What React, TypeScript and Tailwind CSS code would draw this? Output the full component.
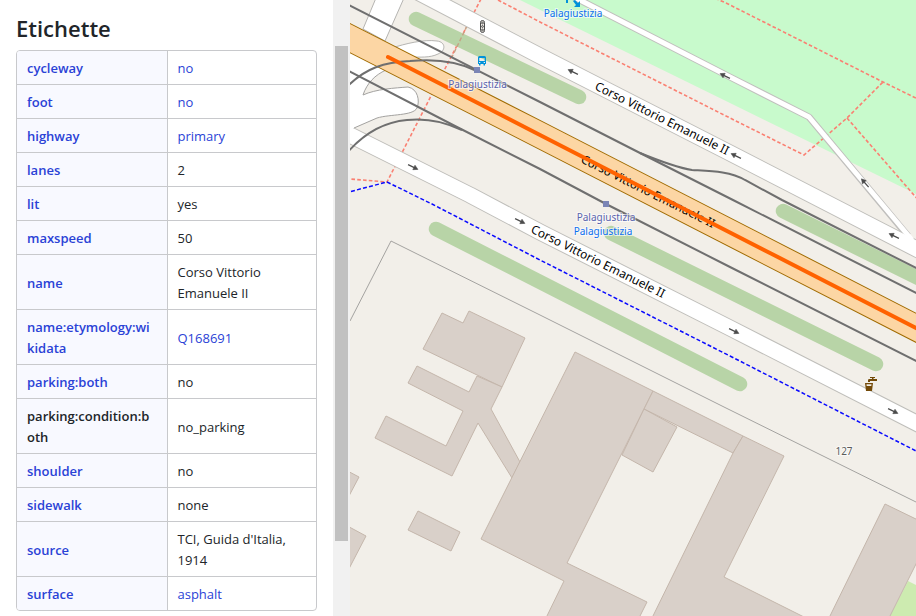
type Tag = { name: string; value: string; nameLink?: boolean; valueLink?: boolean };

const tags: Tag[] = [
  { name: "cycleway", value: "no", nameLink: true, valueLink: true },
  { name: "foot", value: "no", nameLink: true, valueLink: true },
  { name: "highway", value: "primary", nameLink: true, valueLink: true },
  { name: "lanes", value: "2", nameLink: true },
  { name: "lit", value: "yes", nameLink: true },
  { name: "maxspeed", value: "50", nameLink: true },
  { name: "name", value: "Corso Vittorio Emanuele II", nameLink: true },
  { name: "name:etymology:wikidata", value: "Q168691", nameLink: true, valueLink: true },
  { name: "parking:both", value: "no", nameLink: true },
  { name: "parking:condition:both", value: "no_parking" },
  { name: "shoulder", value: "no", nameLink: true },
  { name: "sidewalk", value: "none", nameLink: true },
  { name: "source", value: "TCI, Guida d'Italia, 1914", nameLink: true },
  { name: "surface", value: "asphalt", nameLink: true, valueLink: true },
];

function Label({ text, link }: { text: string; link?: boolean }) {
  return link ? (
    <a href="#" className="text-[#2a42d6]">
      {text}
    </a>
  ) : (
    <>{text}</>
  );
}

function TagTable() {
  return (
    <div className="overflow-hidden rounded border border-[#c8c9cc]">
      <table className="w-full table-fixed border-collapse text-left text-[13px] leading-[21px]">
        <tbody>
          {tags.map((t) => (
            <tr key={t.name} className="border-b border-[#c8c9cc] last:border-b-0">
              <th
                scope="row"
                className="w-[150px] border-r border-[#c8c9cc] bg-[#f8f9ff] pt-[7px] pr-3.5 pb-[5px] pl-2.5 align-middle font-semibold break-all"
              >
                <Label text={t.name} link={t.nameLink} />
              </th>
              <td className="px-2.5 pt-[7px] pb-[5px] align-middle break-words">
                <Label text={t.value} link={t.valueLink} />
              </td>
            </tr>
          ))}
        </tbody>
      </table>
    </div>
  );
}

const buildings = [
  "442,313 463,323 469,311 525,338 502,387 423,349",
  "417,366 469,392 477,376 502,387 491,409 520,462 512,478 478,423 452,476 375,438 386,416 446,446 463,411 408,383",
  "575,352 653,391 567,563 647,602 638,620 545,620 564,581 481,539",
  "653,391 743,436 733,453 644,409",
  "644,409 677,427 653,472 622,455",
  "743,436 784,456 724,577 810,620 651,620 733,453",
  "885,504 920,521 920,556 888,620 828,620",
  "418,511 460,532 451,551 408,530",
  "340,467 359,477 340,513",
  "340,522 366,536 340,586",
];

const roads = [
  "M410,-12 L540,56 L728,152 L930,256",
  "M340,130 L470,195 L540,232 L730,328 L930,430",
];

const arrows: [number, number, number][] = [
  [573, 72, 206],
  [736, 156, 206],
  [894, 236, 206],
  [725, 76, 206],
  [865, 183, 229],
  [413, 167, 26],
  [520, 221, 26],
  [734, 331, 26],
  [893, 411, 26],
];

const avenueLabels: [number, number][] = [
  [594, 89],
  [580, 162],
  [530, 232],
];

function AvenueName({ x, y }: { x: number; y: number }) {
  return (
    <text transform={`translate(${x} ${y}) rotate(26.5)`} fontSize="12" fill="#000">
      Corso Vittorio Emanuele II
    </text>
  );
}

function StreetMap() {
  return (
    <svg
      viewBox="350 0 566 616"
      preserveAspectRatio="xMinYMin slice"
      className="h-full w-full font-['Noto_Sans','Open_Sans',sans-serif]"
      role="img"
      aria-label="Map"
    >
      <rect x="340" y="0" width="600" height="640" fill="#f2efe9" />
      <path d="M520,0 L730,103 L920,196 V0 Z" fill="#c8facc" />
      <path d="M908,581 L920,587 V620 H888 Z" fill="#cdebb0" />

      <g fill="#d9d0c9" stroke="#c4b6ab" strokeWidth="1">
        {buildings.map((p) => (
          <polygon key={p} points={p} />
        ))}
      </g>
      <path d="M350,321 L391,241 L540,315 L726,408 L920,504" fill="none" stroke="#9b9a97" strokeWidth="0.9" />

      <g fill="none" stroke="#fa8072" strokeWidth="1.6" strokeDasharray="3.600 2.200">
        <path d="M498,0 L540,22 L730,118 L804,155 L847,118 L883,82" />
        <path d="M710,-4 L726,3 L883,82 L920,100" />
        <path d="M847,118 L920,202" />
        <path d="M481,-1 L467,26 L432,94 L387,182 L350,179" />
      </g>

      <g fill="none" stroke="#b8d4a7" strokeWidth="14.5" strokeLinecap="round">
        <path d="M416,19 L579,97" />
        <path d="M436,229 L740,384" />
        <path d="M611,233 L876,364" />
        <path d="M783,211 L924,281" />
      </g>
      <path
        d="M467,26 L452,57"
        fill="none"
        stroke="#c5a184"
        strokeWidth="1.4"
        strokeDasharray="4 2.4"
      />

      <g fill="none" strokeLinejoin="round">
        <path d="M572,-4 L730,77 L809,117 L908,236" stroke="#c0bfbd" strokeWidth="7" />
        <g stroke="#bfbeba" strokeWidth="17">
          {roads.map((d) => (
            <path key={d} d={d} />
          ))}
        </g>
        <path
          d="M376,-2 L363,29 L385,41 L404,-2 Z M392,48 C404,44 424,39 437,41 C446,42 446,51 438,54 C430,58 420,57 410,57 Z"
          fill="#fff"
          stroke="#b5b4b1"
        />
        <path
          d="M345,45 L386,70 C375,75 367,83 363,95 C376,89 395,88 408,87 C418,89 420,101 417,108 C413,116 390,114 377,118 L354,128 L345,140 Z"
          fill="#fff"
          stroke="#a3a2a0"
        />
        <g stroke="#fff" strokeWidth="15">
          {roads.map((d) => (
            <path key={d} d={d} />
          ))}
        </g>
        <path d="M572,-4 L730,77 L809,117 L912,240" stroke="#fff" strokeWidth="5" />
        <path d="M340,33 L540,135 L930,335" stroke="#a06b00" strokeWidth="27" />
        <path d="M340,33 L540,135 L930,335" stroke="#fcd6a4" strokeWidth="25" />
      </g>

      <path
        d="M345,193 L387,182 L432,204 L540,260 L730,356 L920,453"
        fill="none"
        stroke="#0a0aff"
        strokeWidth="1.5"
        strokeDasharray="4 2.2"
      />

      <g fill="none" stroke="#6f6f6f" strokeWidth="2">
        <path d="M345,3 L540,102 L642,154 L733,200 L920,295" />
        <path d="M640,153 C662,162 680,168 692,170 C710,171 730,171 745,180 L782,200 L920,270" />
        <path d="M345,69 L455,126 L540,169 L606,204 L730,267 L920,363" />
        <path d="M347,87 C365,68 385,62 410,61 C430,59 455,60 477,71" />
        <path d="M347,153 C365,132 385,122 407,120 C425,118 443,121 462,130" />
      </g>

      {avenueLabels.map(([x, y]) => (
        <AvenueName key={x} x={x} y={y} />
      ))}

      <path d="M388,57 L540,135 L924,332" fill="none" stroke="#ff6200" strokeWidth="4" strokeLinecap="round" />

      <g stroke="#4b4b4b" fill="#4b4b4b">
        {arrows.map(([x, y, a]) => (
          <g key={x} transform={`translate(${x} ${y}) rotate(${a})`}>
            <path d="M-5.500,0 H2" strokeWidth="1.2" />
            <path d="M1,-2.500 L5.500,0 L1,2.500 Z" strokeWidth="0.5" />
          </g>
        ))}
      </g>

      <g fill="#7b85b5">
        <rect x="474" y="67" width="6" height="6" />
        <rect x="603" y="201" width="6" height="6" />
      </g>

      <g fontSize="10" textAnchor="middle" stroke="#fff" strokeOpacity="0.6" strokeWidth="2" paintOrder="stroke">
        <text x="477.500" y="88" fill="#5a64ad">Palagiustizia</text>
        <text x="606" y="221" fill="#5a64ad">Palagiustizia</text>
        <text x="603" y="235" fill="#0d6fee">Palagiustizia</text>
        <text x="573" y="17" fill="#0d6fee">Palagiustizia</text>
        <text x="844" y="455" fill="#5c5c5c">127</text>
      </g>

      {/* traffic signals */}
      <g fill="none" stroke="#4b4b4b" strokeWidth="1">
        <rect x="480.500" y="20.500" width="4" height="12" rx="2" fill="#f2efe9" />
        <circle cx="482.500" cy="23" r="0.900" />
        <circle cx="482.500" cy="26.500" r="0.900" />
        <circle cx="482.500" cy="30" r="0.900" />
      </g>

      {/* bus stop */}
      <g fill="#0092da">
        <path
          fillRule="evenodd"
          d="M479.500,56 H484.500 Q486,56 486,57.500 V64 H485 V65.500 H483.500 V64 H480.500 V65.500 H479 V64 H478 V57.500 Q478,56 479.500,56 Z M479.300,58 V61 H484.700 V58 Z M479,62 V63 H480.300 V62 Z M483.700,62 V63 H485 V62 Z"
        />
        <path d="M566,0 H568 V3 H566 Z M573,1 L575,0 L578,3 L580,1 V7 H574 L576,5 Z" />
      </g>

      {/* drinking water */}
      <g fill="#734a08">
        <path d="M865,383 H873 L872,391 H866 Z M866.500,384.300 L866.700,386 H871.300 L871.500,384.300 Z" fillRule="evenodd" />
        <path d="M868,382 V380 Q868,379 869.500,379 H872 V378 H870 V377 H875 V378 H873.500 V379 H877 V381 H870 V382 Z" />
      </g>
    </svg>
  );
}

export default function App() {
  return (
    <div className="flex h-screen overflow-hidden bg-white font-['Open_Sans','Noto_Sans',sans-serif] text-[#212529]">
      <aside className="flex w-[350px] shrink-0">
        <div className="min-w-0 flex-1 overflow-hidden px-4 pt-3.5">
          <h2 className="mb-[7px] text-[22px] leading-[29px] font-semibold">Etichette</h2>
          <TagTable />
        </div>
        <div className="w-[17px] bg-[#f1f1f1] px-0.5 pt-[46px]">
          <div className="h-[495px] bg-[#c1c1c1]" />
        </div>
      </aside>
      <main className="min-w-0 flex-1">
        <StreetMap />
      </main>
    </div>
  );
}
